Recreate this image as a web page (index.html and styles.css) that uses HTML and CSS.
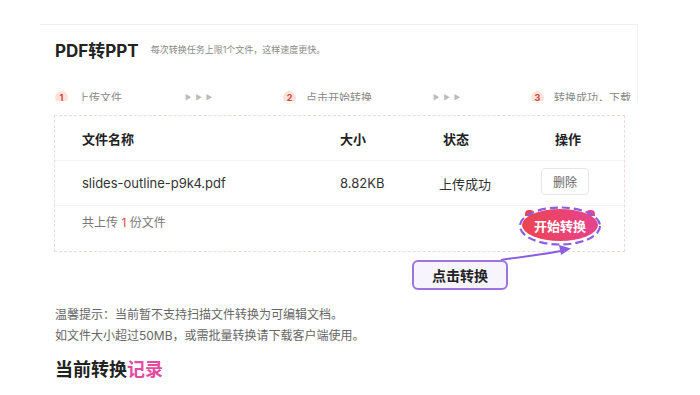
FILE: index.html
```html
<!DOCTYPE html>
<html lang="zh-CN">
<head>
  <meta charset="UTF-8">
  <title>PDF转PPT</title>
  <link rel="stylesheet" href="styles.css">
</head>
<body>
  <div class="page">
    <!-- Top card, cut off under the steps -->
    <div class="card">
      <div class="title-row">
        <h1>PDF转PPT</h1>
        <span class="subtitle">每次转换任务上限1个文件，这样速度更快。</span>
      </div>
      <div class="steps">
        <div class="step step-1"><span class="num">1</span>上传文件</div>
        <div class="arrows">▶ ▶ ▶</div>
        <div class="step step-2"><span class="num">2</span>点击开始转换</div>
        <div class="arrows">▶ ▶ ▶</div>
        <div class="step step-3"><span class="num">3</span>转换成功，下载</div>
      </div>
    </div>

    <div class="upload-wrap">
      <div class="upload-box">
        <div class="row head">
          <div class="c-name">文件名称</div>
          <div class="c-size">大小</div>
          <div class="c-state">状态</div>
          <div class="c-op">操作</div>
        </div>
        <div class="row">
          <div class="c-name">slides-outline-p9k4.pdf</div>
          <div class="c-size">8.82KB</div>
          <div class="c-state">上传成功</div>
          <div class="c-op"><button class="del-btn">删除</button></div>
        </div>
        <div class="foot">
          <div class="count">共上传 <em>1</em> 份文件</div>
          <div class="start-wrap">
            <button class="start-btn">开始转换</button>
            <svg class="ring" width="86" height="42" viewBox="0 0 86 42">
              <ellipse cx="43" cy="21" rx="40" ry="18.5" fill="none" stroke="#8a5fe0" stroke-width="2.2" stroke-dasharray="8 4"/>
            </svg>
          </div>
        </div>
      </div>

      <!-- annotation callout -->
      <svg class="pointer" width="90" height="40" viewBox="0 0 90 40">
        <path d="M2 31 C 25 27, 45 26, 66 21" fill="none" stroke="#8a5fe0" stroke-width="2"/>
        <path d="M60 16 L72 19.5 L62 26 Z" fill="#8a5fe0"/>
      </svg>
      <div class="callout">点击转换</div>
    </div>

    <div class="tips">
      <p>温馨提示：当前暂不支持扫描文件转换为可编辑文档。</p>
      <p>如文件大小超过50MB，或需批量转换请下载客户端使用。</p>
    </div>

    <h2 class="records">当前转换<span>记录</span></h2>
  </div>
</body>
</html>
```

FILE: styles.css
```css
* {
  box-sizing: border-box;
}

body {
  margin: 0;
  background: #fff;
  font-family: "Inter", "Noto Sans CJK SC", sans-serif;
  color: #222;
}

.page {
  padding: 24px 0 0 40px;
}

.card {
  width: 598px;
  height: 77px;
  overflow: hidden;
  border-top: 1px solid #f0f0f0;
  border-right: 1px solid #f0f0f0;
  padding: 13px 0 0 15px;
}

.title-row {
  display: flex;
  align-items: center;
  gap: 12px;
  height: 22px;
}

.title-row h1 {
  margin: 0;
  font-size: 17px;
  font-weight: 700;
  color: #222;
}

.subtitle {
  font-size: 9px;
  color: #888;
  padding-top: 1px;
}

.steps {
  display: flex;
  align-items: center;
  margin-top: 29px;
  font-size: 11px;
  color: #888;
  height: 16px;
}

.step {
  display: flex;
  align-items: center;
  gap: 10px;
}

.num {
  width: 13px;
  height: 13px;
  border-radius: 50%;
  background: #fbe3dd;
  color: #d9432e;
  font-size: 9px;
  font-weight: 700;
  display: flex;
  align-items: center;
  justify-content: center;
}

.step-1 { width: 130px; }
.step-2 { width: 150px; }

.arrows {
  font-size: 7px;
  color: #bbb;
  letter-spacing: 1px;
  width: 98px;
}

.upload-wrap {
  position: relative;
  margin: 14px 0 0 14px;
  width: 571px;
}

.upload-box {
  border: 1px dashed #f0d8d8;
  height: 137px;
}

.row {
  display: grid;
  grid-template-columns: 258px 99px 102px auto;
  align-items: center;
  height: 45px;
  padding-left: 27px;
  font-size: 13px;
  border-bottom: 1px solid #f5f5f5;
  color: #333;
}

.row.head {
  font-weight: 700;
  color: #222;
}

.row.head .c-state { padding-left: 4px; }
.row.head .c-op { padding-left: 14px; }

.del-btn {
  font-family: inherit;
  font-size: 12px;
  color: #666;
  background: #fff;
  border: 1px solid #e6e6e6;
  border-radius: 4px;
  width: 48px;
  height: 27px;
  padding: 0;
  margin-top: -3px;
}

.foot {
  display: flex;
  justify-content: space-between;
  align-items: flex-start;
  height: 45px;
  padding: 0 27px;
  font-size: 12px;
  color: #777;
}

.count {
  padding-top: 7px;
}

.foot em {
  font-style: normal;
  color: #e0473e;
}

.start-wrap {
  position: relative;
  margin-top: 3px;
  margin-right: -1px;
  width: 76px;
  height: 32px;
}

.start-wrap::before,
.start-wrap::after {
  content: "";
  position: absolute;
  top: 1px;
  width: 8px;
  height: 6px;
  background: #e8434f;
  border-radius: 4px 2px 0 0;
}

.start-wrap::before { left: 3px; }
.start-wrap::after { right: 3px; background: #e5448e; border-radius: 2px 4px 0 0; }

.start-btn {
  position: relative;
  z-index: 1;
  font-family: inherit;
  font-size: 13px;
  font-weight: 700;
  color: #fff;
  border: none;
  border-radius: 50%;
  width: 76px;
  height: 32px;
  padding: 0;
  background: linear-gradient(90deg, #ee4450, #e6438f);
}

.ring {
  position: absolute;
  z-index: 2;
  left: -5px;
  top: -4px;
}

.pointer {
  position: absolute;
  left: 445px;
  top: 114px;
}

.callout {
  position: absolute;
  left: 358px;
  top: 145px;
  width: 96px;
  height: 30px;
  border: 2px solid #9d73e0;
  border-radius: 6px;
  background: #f8f4fd;
  display: flex;
  align-items: center;
  justify-content: center;
  font-size: 14px;
  font-weight: 700;
  color: #222;
}

.tips {
  margin: 52px 0 0 15px;
  font-size: 12px;
  color: #666;
}

.tips p {
  margin: 0;
  line-height: 21px;
}

.records {
  margin: 9px 0 0 15px;
  font-size: 18px;
  font-weight: 700;
  color: #222;
}

.records span {
  color: #e64aa0;
}
```
